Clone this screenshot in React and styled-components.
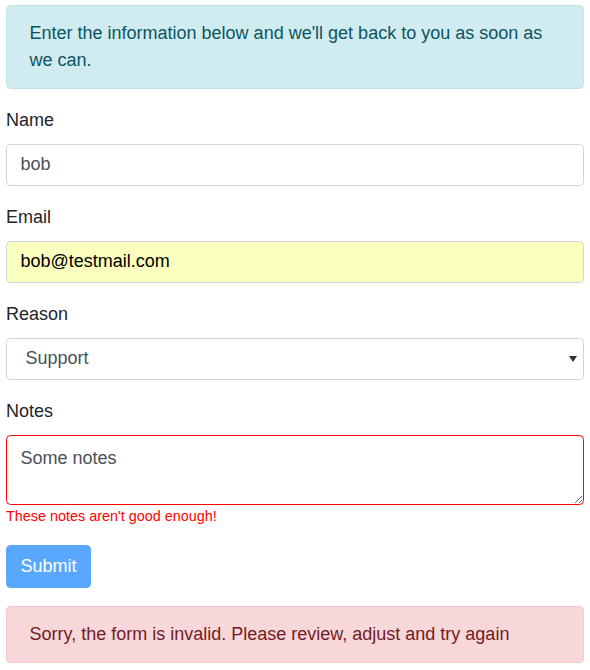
import React from "react";
import styled, { createGlobalStyle } from "styled-components";

const GlobalStyle = createGlobalStyle`
  html { font-size: 18px; }
  body {
    margin: 0;
    padding: 0;
    background: #fff;
    font-family: "Liberation Sans", Arial, sans-serif;
    font-size: 18px;
    line-height: 1.5;
    color: #212529;
  }
  * { box-sizing: border-box; }
`;

const Page = styled.div`
  padding: 5px 6px 0 6px;
  width: 590px;
`;

const Alert = styled.div`
  padding: 14px 22.5px;
  margin-bottom: 18px;
  border: 1px solid ${(p) => (p.$variant === "danger" ? "#f5c6cb" : "#bee5eb")};
  border-radius: 4.5px;
  background: ${(p) => (p.$variant === "danger" ? "#f8d7da" : "#d1ecf1")};
  color: ${(p) => (p.$variant === "danger" ? "#721c24" : "#0c5460")};
`;

const Form = styled.form`
  display: flex;
  flex-direction: column;
`;

const Group = styled.div`
  margin-bottom: 18px;
`;

const Label = styled.label`
  display: block;
  margin-bottom: 9.5px;
`;

const Control = styled.input`
  display: block;
  width: 100%;
  height: 42.5px;
  padding: 6.75px 13.5px;
  font: inherit;
  line-height: 1.5;
  color: ${(p) => (p.$autofill ? "#000" : "#495057")};
  background: ${(p) => (p.$autofill ? "#faffbd" : "#fff")};
  border: 1px solid ${(p) => (p.$invalid ? "#ff0000" : "#ced4da")};
  border-radius: 4.5px;
  outline: none;
`;

const TextArea = styled(Control).attrs({ as: "textarea" })`
  height: 70px;
  padding-top: 9px;
  resize: vertical;
`;

const SelectWrap = styled.div`
  position: relative;
`;

const Select = styled(Control).attrs({ as: "select" })`
  appearance: none;
  padding-left: 18.5px;
`;

const Caret = styled.svg`
  position: absolute;
  right: 7px;
  top: 18px;
  pointer-events: none;
`;

const Feedback = styled.div`
  margin-top: 1px;
  font-size: 14.4px;
  line-height: 1.5;
  color: #ff0000;
`;

const Button = styled.button`
  align-self: flex-start;
  height: 42.5px;
  padding: 6.75px 13.5px;
  font: inherit;
  line-height: 1.5;
  color: #fff;
  background: #007bff;
  border: 1px solid #007bff;
  border-radius: 4.5px;
  opacity: 0.65;
  margin-bottom: 18px;
`;

export default function App() {
  return (
    <>
      <GlobalStyle />
      <Page>
        <Alert>
          Enter the information below and we'll get back to you as soon as we can.
        </Alert>
        <Form onSubmit={(e) => e.preventDefault()}>
          <Group>
            <Label>Name</Label>
            <Control defaultValue="bob" />
          </Group>
          <Group>
            <Label>Email</Label>
            <Control $autofill defaultValue="bob@testmail.com" />
          </Group>
          <Group>
            <Label>Reason</Label>
            <SelectWrap>
              <Select defaultValue="Support">
                <option>Support</option>
                <option>Sales</option>
                <option>Other</option>
              </Select>
              <Caret width="8" height="6" viewBox="0 0 8 6">
                <path d="M0 0h8L4 6z" fill="#333" />
              </Caret>
            </SelectWrap>
          </Group>
          <Group>
            <Label>Notes</Label>
            <TextArea $invalid defaultValue="Some notes" />
            <Feedback>These notes aren't good enough!</Feedback>
          </Group>
          <Button type="submit" disabled>
            Submit
          </Button>
        </Form>
        <Alert $variant="danger">
          Sorry, the form is invalid. Please review, adjust and try again
        </Alert>
      </Page>
    </>
  );
}
